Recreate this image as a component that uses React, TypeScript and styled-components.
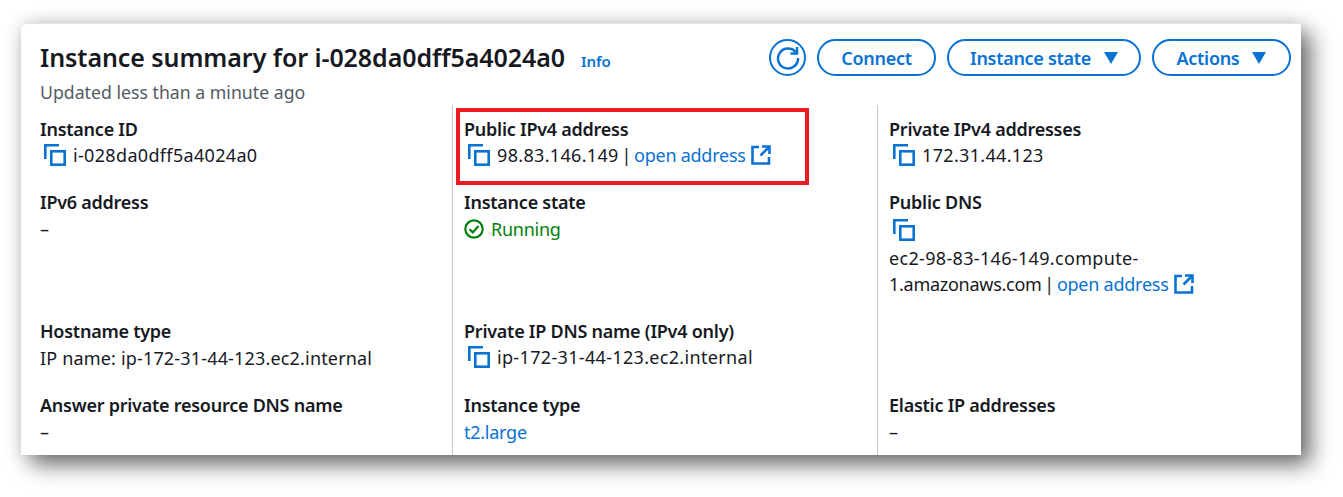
import * as React from "react";
import styled, { createGlobalStyle } from "styled-components";

const GlobalStyle = createGlobalStyle`
  html, body {
    margin: 0;
    padding: 0;
    background: #ffffff;
  }
  body {
    font-family: "Noto Sans", "Open Sans", Arial, sans-serif;
    color: #16191f;
    font-size: 18px;
    line-height: 26px;
  }
`;

const Page = styled.div`
  width: 1343px;
  height: 497px;
  padding: 23px 42px 0 21px;
  box-sizing: border-box;
  overflow: hidden;
`;

const Card = styled.section`
  width: 1280px;
  height: 432px;
  background: #ffffff;
  border-top-left-radius: 6px;
  border-top: 1px solid #e4e4e4;
  box-sizing: border-box;
  box-shadow: 10px 10px 22px rgba(0, 0, 0, 0.55), 0 0 18px rgba(0, 0, 0, 0.14);
  overflow: hidden;
`;

const Header = styled.header`
  display: flex;
  justify-content: space-between;
  align-items: flex-start;
  padding: 15px 10px 0 19px;
  box-sizing: border-box;
  height: 81px;
`;

const TitleBlock = styled.div`
  display: flex;
  flex-direction: column;
`;

const TitleRow = styled.div`
  display: flex;
  align-items: baseline;
  gap: 16px;
`;

const Title = styled.h1`
  margin: 0;
  font-size: 25px;
  line-height: 36px;
  font-weight: 650;
  color: #16191f;
  letter-spacing: -0.07px;
`;

const InfoLink = styled.a`
  color: #0972d3;
  font-size: 15px;
  font-weight: 600;
`;

const Subtitle = styled.div`
  color: #545b64;
  font-size: 17.7px;
  line-height: 26px;
  margin-top: 4px;
`;

const Actions = styled.div`
  display: flex;
  align-items: center;
  gap: 11px;
`;

const RefreshButton = styled.button`
  width: 37px;
  height: 37px;
  padding: 0;
  border: 2.5px solid #0972d3;
  border-radius: 50%;
  background: #ffffff;
  color: #0972d3;
  display: flex;
  align-items: center;
  justify-content: center;
`;

const PillButton = styled.button<{ $width: number }>`
  width: ${(p) => p.$width}px;
  height: 37px;
  box-sizing: border-box;
  border: 2.5px solid #0972d3;
  border-radius: 19px;
  background: #ffffff;
  color: #0972d3;
  font-family: inherit;
  font-size: 18px;
  font-weight: 650;
  letter-spacing: -0.3px;
  display: flex;
  align-items: center;
  justify-content: center;
  gap: 13px;
  padding: 0;
`;

const Caret = styled.span`
  width: 0;
  height: 0;
  border-left: 7.5px solid transparent;
  border-right: 7.5px solid transparent;
  border-top: 12px solid #0972d3;
`;

const Details = styled.div`
  display: grid;
  grid-template-columns: 431px 425px 424px;
  grid-template-rows: 73px 129px 74px 1fr;
  height: 350px;
`;

const Cell = styled.div<{ $first?: boolean }>`
  position: relative;
  padding: 11px 0 0 ${(p) => (p.$first ? 19 : 11)}px;
  border-left: ${(p) => (p.$first ? "none" : "1px solid #c8c8c8")};
`;

const Label = styled.div`
  font-weight: 650;
  color: #16191f;
  letter-spacing: -0.25px;
`;

const Value = styled.div`
  display: flex;
  align-items: center;
  gap: 7px;
  color: #16191f;
  height: 27px;
`;

const CopyRow = styled(Value)`
  padding-left: 4px;
  height: 26px;
`;

const IconLine = styled.div`
  height: 30px;
  padding-left: 4px;
  display: flex;
  align-items: center;
`;

// digit-heavy values run a little wider in the reference
const Code = styled.span<{ $spacing?: number }>`
  letter-spacing: ${(p) => p.$spacing ?? 0.33}px;
`;

const Link = styled.a`
  color: #0972d3;
  letter-spacing: -0.25px;
  word-spacing: 0;
`;

const Green = styled.span`
  color: #037f0c;
  letter-spacing: -0.25px;
`;

const Highlight = styled.div`
  position: absolute;
  left: 3px;
  top: 3px;
  width: 353px;
  height: 77px;
  box-sizing: border-box;
  border: 4px solid #ed1c24;
  pointer-events: none;
`;

const AddressLine = styled.div`
  white-space: pre;
  word-spacing: -2px;
`;

const External = styled.svg`
  display: inline-block;
  vertical-align: -3px;
  margin-left: 5px;
`;

const CopyIcon = () => (
  <svg width="22" height="22" viewBox="0 0 22 22" fill="none" stroke="#0972d3" strokeWidth="2.6">
    <rect x="7.3" y="7.3" width="13.4" height="13.4" />
    <path d="M1.3 15V1.3H15" />
  </svg>
);

const ExternalIcon = () => (
  <External width="20" height="20" viewBox="0 0 20 20" fill="none" stroke="#0972d3" strokeWidth="2.6">
    <path d="M8 2H1.5V18.5H18V12" />
    <path d="M11 1.5H18.5V9" />
    <path d="M18 2L9.5 10.5" />
  </External>
);

const CheckIcon = () => (
  <svg width="20" height="20" viewBox="0 0 20 20" fill="none" stroke="#037f0c" strokeWidth="2.2">
    <circle cx="10" cy="10" r="8.7" />
    <path d="M5.5 10.2L8.8 13.4L14.5 7" />
  </svg>
);

const RefreshIcon = () => (
  <svg width="24" height="24" viewBox="0 0 24 24" fill="none" stroke="#0972d3" strokeWidth="2.5">
    <path d="M20 6.5A10 10 0 1 0 22 12" />
    <path d="M21 1V7.5H14.5" />
  </svg>
);

const App = () => {
  return (
    <Page>
      <GlobalStyle />
      <Card>
        <Header>
          <TitleBlock>
            <TitleRow>
              <Title>Instance summary for i-028da0dff5a4024a0</Title>
              <InfoLink>Info</InfoLink>
            </TitleRow>
            <Subtitle>Updated less than a minute ago</Subtitle>
          </TitleBlock>
          <Actions>
            <RefreshButton>
              <RefreshIcon />
            </RefreshButton>
            <PillButton $width={119}>Connect</PillButton>
            <PillButton $width={194}>
              Instance state <Caret />
            </PillButton>
            <PillButton $width={139}>
              Actions <Caret />
            </PillButton>
          </Actions>
        </Header>
        <Details>
          <Cell $first>
            <Label>Instance ID</Label>
            <CopyRow>
              <CopyIcon />
              <Code>i-028da0dff5a4024a0</Code>
            </CopyRow>
          </Cell>
          <Cell>
            <Highlight />
            <Label>Public IPv4 address</Label>
            <CopyRow>
              <CopyIcon />
              <AddressLine>
                <Code>98.83.146.149</Code> | <Link>open address</Link>
                <ExternalIcon />
              </AddressLine>
            </CopyRow>
          </Cell>
          <Cell>
            <Label>Private IPv4 addresses</Label>
            <CopyRow>
              <CopyIcon />
              <Code>172.31.44.123</Code>
            </CopyRow>
          </Cell>

          <Cell $first>
            <Label>IPv6 address</Label>
            <Value>–</Value>
          </Cell>
          <Cell>
            <Label>Instance state</Label>
            <Value>
              <CheckIcon />
              <Green>Running</Green>
            </Value>
          </Cell>
          <Cell>
            <Label>Public DNS</Label>
            <IconLine>
              <CopyIcon />
            </IconLine>
            <div>
              <Code>ec2-98-83-146-149.compute-</Code>
            </div>
            <AddressLine>
              <Code $spacing={-0.27}>1.amazonaws.com</Code> | <Link>open address</Link>
              <ExternalIcon />
            </AddressLine>
          </Cell>

          <Cell $first>
            <Label>Hostname type</Label>
            <Value>
              <Code $spacing={0.17}>IP name: ip-172-31-44-123.ec2.internal</Code>
            </Value>
          </Cell>
          <Cell>
            <Label>Private IP DNS name (IPv4 only)</Label>
            <CopyRow>
              <CopyIcon />
              <Code>ip-172-31-44-123.ec2.internal</Code>
            </CopyRow>
          </Cell>
          <Cell />

          <Cell $first>
            <Label>Answer private resource DNS name</Label>
            <Value>–</Value>
          </Cell>
          <Cell>
            <Label>Instance type</Label>
            <Value>
              <Link>t2.large</Link>
            </Value>
          </Cell>
          <Cell>
            <Label>Elastic IP addresses</Label>
            <Value>–</Value>
          </Cell>
        </Details>
      </Card>
    </Page>
  );
};

export default App;
